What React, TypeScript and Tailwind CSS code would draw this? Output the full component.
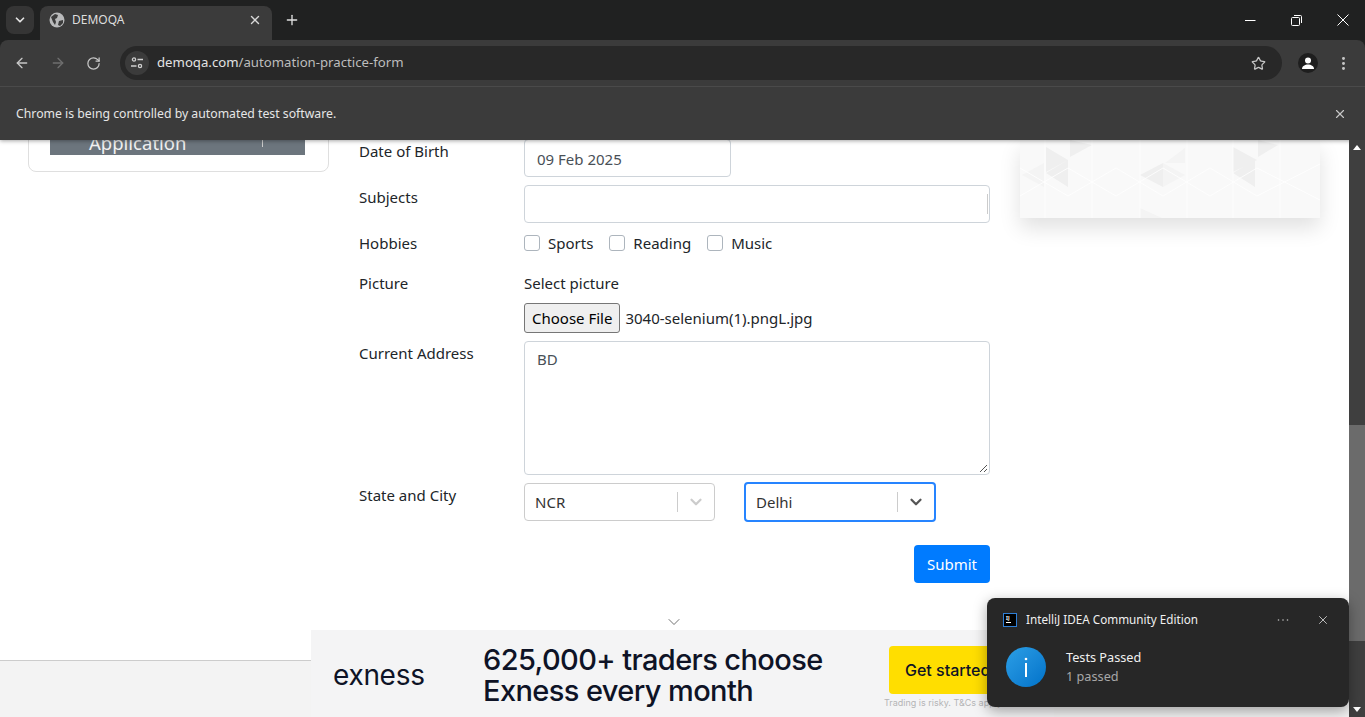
import { ArrowLeft, ArrowRight, ChevronDown, EllipsisVertical, Plus, RotateCw, Star, X } from 'lucide-react';

const ui = 'font-["Noto_Sans",sans-serif]';

function Globe() {
  return (
    <svg width="16" height="16" viewBox="0 0 16 16" className="shrink-0">
      <circle cx="8" cy="8" r="7.5" fill="#b9babb" />
      <path d="M2 5l4-3 3 1-1 3-2 1 1 3-1 3-2-3zM10 9l4-1 0 3-3 3-2-1z" fill="#3c3c3c" />
    </svg>
  );
}

function Toolbar() {
  return (
    <div className="flex h-[46px] items-center rounded-t-lg bg-[#3b3b3b]">
      <div className="flex w-[120px] items-center pl-[14px] text-[#c7c7c7]">
        <ArrowLeft size={16} strokeWidth={2} />
        <ArrowRight size={16} strokeWidth={2} className="ml-[20px] text-[#6f6f6f]" />
        <RotateCw size={15} strokeWidth={2} className="ml-[20px]" />
      </div>
      <div className="flex h-[34px] w-[1162px] items-center rounded-full bg-[#282828]">
        <div className="ml-[5px] flex h-[24px] w-[24px] items-center justify-center rounded-full bg-[#3b3b3b]">
          <svg width="14" height="14" viewBox="0 0 14 14" fill="none" stroke="#d0d0d0" strokeWidth="1.3">
            <circle cx="4" cy="3.5" r="1.6" />
            <path d="M7.5 3.5H13M1 10h5.5" />
            <circle cx="10" cy="10" r="1.6" />
          </svg>
        </div>
        <span className="ml-[8px] text-[13.2px] text-[#e3e3e3]">
          demoqa.com<span className="text-[#bdbdbd]">/automation-practice-form</span>
        </span>
        <Star size={15} strokeWidth={2} className="ml-auto mr-[16px] text-[#c7c7c7]" />
      </div>
      <div className="ml-[16px] flex h-[20px] w-[20px] items-center justify-center overflow-hidden rounded-full bg-[#1e1e1e]">
        <svg width="14" height="14" viewBox="0 0 14 14" fill="#fff">
          <circle cx="7" cy="4.5" r="3" />
          <path d="M1 13c0-3 3-4.500 6-4.500s6 1.500 6 4.500z" />
        </svg>
      </div>
      <EllipsisVertical size={17} strokeWidth={2.2} className="ml-[17px] text-[#c7c7c7]" />
    </div>
  );
}

function BrowserChrome() {
  return (
    <header className={`relative z-10 h-[140px] shrink-0 bg-[#202121] shadow-[0_1px_4px_rgba(0,0,0,0.35)] ${ui}`}>
      <div className="flex h-[40px] items-end pl-[6px]">
        <div className="mb-[6px] flex h-[28px] w-[28px] items-center justify-center rounded-lg bg-[#353535] text-[#e3e3e3]">
          <ChevronDown size={14} strokeWidth={3} />
        </div>
        <div className="ml-[6px] flex h-[34px] w-[232px] items-center rounded-t-lg bg-[#3b3b3b] pb-[6px] pl-[9px] pr-[10px]">
          <Globe />
          <span className="ml-[7px] text-[12px] text-[#dedede]">DEMOQA</span>
          <X size={14} strokeWidth={2.4} className="ml-auto text-[#d8d8d8]" />
        </div>
        <Plus size={16} strokeWidth={2} className="mb-[12px] ml-[12px] text-[#e0e0e0]" />
        <div className="mb-[14px] ml-auto flex items-center text-white">
          <svg width="11" height="11" viewBox="0 0 11 11" stroke="currentColor" fill="none" className="mr-[35px]">
            <path d="M0 5.500h10.500" />
          </svg>
          <svg width="11" height="11" viewBox="0 0 11 11" stroke="currentColor" fill="none" className="mr-[35px]">
            <rect x="0.500" y="2.500" width="8" height="8" rx="1" />
            <path d="M3 .5h6.500a1 1 0 0 1 1 1V8" />
          </svg>
          <svg width="12" height="12" viewBox="0 0 12 12" stroke="currentColor" fill="none" className="mr-[16px]">
            <path d="M.5.5l11 11M11.500.5l-11 11" />
          </svg>
        </div>
      </div>
      <Toolbar />
      <div className="flex h-[54px] items-center justify-between border-t border-[#4a4a4a] bg-[#3b3b3b] pl-[16px] pr-[18px]">
        <span className="pt-px text-[12.25px] text-[#e6e6e6]">Chrome is being controlled by automated test software.</span>
        <X size={14} strokeWidth={2} className="text-[#c7c7c7]" />
      </div>
    </header>
  );
}

function Sidebar() {
  return (
    <aside className="ml-[28px] h-[60px] w-[301px] shrink-0 rounded-b-lg border border-[#dfdfdf] pl-[21px] pr-[23px] -mt-[28px]">
      <div className="flex h-[42px] items-end justify-between bg-[#6c757d] pl-[39px] pr-[42px]">
        <span className="text-[18.5px] leading-[25px] text-[#f1f1f1]">Application</span>
        <span className="mb-[8px] h-[7px] w-px bg-[#ccc]" />
      </div>
    </aside>
  );
}

function Row({ label, children }: { label: string; children: React.ReactNode }) {
  return (
    <div className="flex">
      <label className="w-[165px] shrink-0 leading-[24px] text-[#212529]">{label}</label>
      <div className="min-w-0 flex-1">{children}</div>
    </div>
  );
}

function Hobby({ label }: { label: string }) {
  return (
    <label className="flex items-center gap-[8px]">
      <span className="h-[16px] w-[16px] rounded-[3px] border border-[#adb5bd] bg-white" />
      {label}
    </label>
  );
}

function Select({ value, focused }: { value: string; focused?: boolean }) {
  return (
    <div
      className={
        focused
          ? 'flex h-[40px] w-[192px] items-center rounded-[4px] border-2 border-[#2684ff] bg-white pl-[10px]'
          : 'flex h-[38px] w-[191px] items-center rounded-[4px] border border-[#ccc] bg-white pl-[10px]'
      }
    >
      <span className="flex-1 text-[#333]">{value}</span>
      <span className="h-[20px] w-px bg-[#ccc]" />
      <ChevronDown size={18} strokeWidth={3} className={focused ? 'mx-[9px] text-[#555]' : 'mx-[9px] text-[#ccc]'} />
    </div>
  );
}

function PracticeForm() {
  return (
    <form className="ml-[30px] flex w-[631px] shrink-0 flex-col gap-[8px] -mt-px">
      <Row label="Date of Birth">
        <div className="flex h-[38px] w-[207px] items-center rounded-[4px] border border-[#ced4da] pl-[12px] pt-[2px] text-[#495057]">
          09 Feb 2025
        </div>
      </Row>
      <Row label="Subjects">
        <div className="flex h-[38px] items-center justify-end rounded-[4px] border border-[#ced4da] pr-px">
          <span className="h-[20px] w-px bg-[#ccc]" />
        </div>
      </Row>
      <Row label="Hobbies">
        <div className="flex h-[24px] items-center gap-[16px] text-[#212529]">
          <Hobby label="Sports" />
          <Hobby label="Reading" />
          <Hobby label="Music" />
        </div>
      </Row>
      <div className="mt-[8px]">
        <Row label="Picture">
          <p className="leading-[24px] text-[#212529]">Select picture</p>
          <div className="mt-[8px] flex h-[30px] items-center">
            <span className="flex h-[30px] items-center rounded-[3px] border border-[#767676] bg-[#efefef] px-[7px] text-black">
              Choose File
            </span>
            <span className="ml-[5px] text-[#212529]">3040-selenium(1).pngL.jpg</span>
          </div>
        </Row>
      </div>
      <Row label="Current Address">
        <div className="relative h-[134px] rounded-[4px] border border-[#ced4da] px-[12px] py-[6px] text-[#495057]">
          BD
          <svg width="9" height="9" viewBox="0 0 9 9" stroke="#555" className="absolute bottom-px right-px">
            <path d="M1 8l7-7M5 8l3-3" />
          </svg>
        </div>
      </Row>
      <Row label="State and City">
        <div className="flex items-center gap-[29px] -my-px">
          <Select value="NCR" />
          <Select value="Delhi" focused />
        </div>
      </Row>
      <div className="mt-[16px] flex justify-end">
        <span className="flex h-[38px] w-[76px] items-center justify-center rounded-[4px] bg-[#007bff] text-white">
          Submit
        </span>
      </div>
    </form>
  );
}

function AdPattern() {
  return (
    <div className="ml-[30px] h-[78px] w-[300px] shrink-0 bg-[#f9f9f9] shadow-[0_10px_20px_rgba(0,0,0,0.12)]">
      <svg width="300" height="78" viewBox="0 0 300 78">
        <path
          d="M26 7l22 13-22 12zM26 33l22-13v27zM50 0l22 5-22 12zM120 35l23-12v24zM213 7l24 13-24 12zM213 33l22-13v27zM238 0l20 5-20 12z"
          fill="#efefef"
        />
        <path d="M143 23l22 12-22 12zM145 23l20-15v15zM120 68l22 10h-22zM2 35l22-12v24z" fill="#f4f4f4" />
        <path
          d="M0 28l48 28 48-28 47 28 47-28 47 28 63-32M0 56l48-28 48 28 47-28 47 28 47-28 63 32M25 0v78M72 0v78M120 0v78M167 0v78M213 0v78M260 0v78"
          stroke="#ffffff"
          strokeOpacity="0.8"
          fill="none"
        />
      </svg>
    </div>
  );
}

function Banner() {
  return (
    <div className="absolute inset-x-0 bottom-0 h-[57px] border-t border-[#ccc] bg-[#f3f3f3]">
      <div className="absolute -top-[31px] bottom-0 left-[311px] flex w-[743px] items-center bg-[#f4f4f5] pt-[2px] font-['Inter',sans-serif] text-[#0e1326]">
        <ChevronDown size={20} strokeWidth={1} className="absolute -top-[18px] left-[353px] text-[#555]" />
        <span className="ml-[22px] w-[150px] text-[28px] font-normal tracking-[-0.3px]">exness</span>
        <p className="text-[29px] font-medium leading-[31px] tracking-[-0.6px]">
          625,000+ traders choose
          <br />
          Exness every month
        </p>
        <div className="absolute left-[578px] top-[16px] flex h-[48px] w-[130px] items-center rounded-[4px] bg-[#ffde00] pl-[16px] text-[16px] font-medium">
          Get started
        </div>
        <span className="absolute left-[573px] top-[66px] text-[9px] text-[#b5b5b5]">Trading is risky. T&amp;Cs apply</span>
      </div>
    </div>
  );
}

function Toast() {
  return (
    <div className={`absolute bottom-[10px] right-[16px] z-20 h-[109px] w-[362px] rounded-lg bg-[#272727] pl-[16px] pr-[19px] pt-[15px] shadow-[0_4px_14px_rgba(0,0,0,0.35)] ${ui}`}>
      <div className="flex h-[14px] items-center">
        <span className="flex h-[14px] w-[14px] flex-col border border-[#2f7fd6] bg-black px-[2px] py-px">
          <span className="text-[5px] font-bold leading-[6px] text-white">IJ</span>
          <span className="mt-px h-px w-[5px] bg-white" />
        </span>
        <span className="ml-[9px] text-[11.7px] text-[#f0f0f0]">IntelliJ IDEA Community Edition</span>
        <span className="ml-auto text-[#c0c0c0]">
          <svg width="12" height="4" viewBox="0 0 12 4" fill="currentColor">
            <circle cx="1.500" cy="2" r="0.800" />
            <circle cx="6" cy="2" r="0.800" />
            <circle cx="10.500" cy="2" r="0.800" />
          </svg>
        </span>
        <X size={14} strokeWidth={1.500} className="ml-[27px] text-[#d0d0d0]" />
      </div>
      <div className="ml-[3px] mt-[20px] flex items-center">
        <div className="flex h-[40px] w-[40px] items-center justify-center rounded-full bg-gradient-to-br from-[#2b9fe6] to-[#0072c9]">
          <svg width="4" height="20" viewBox="0 0 4 20" fill="#fff">
            <circle cx="2" cy="2" r="1.300" />
            <rect x="1" y="6" width="2" height="14" />
          </svg>
        </div>
        <div className="ml-[20px] text-[12.7px] leading-[19px]">
          <p className="text-[#f0f0f0]">Tests Passed</p>
          <p className="text-[#a8a8a8]">1 passed</p>
        </div>
      </div>
    </div>
  );
}

function Scrollbar() {
  return (
    <div className="absolute inset-y-0 right-0 z-10 flex w-[16px] flex-col items-center bg-[#3f3f3f]">
      <span className="mt-[5px] h-0 w-0 border-x-[4px] border-b-[5px] border-x-transparent border-b-white" />
      <span className="mt-[275px] h-[216px] w-full bg-[#6b6b6b]" />
      <span className="mt-auto mb-[5px] h-0 w-0 border-x-[4px] border-t-[5px] border-x-transparent border-t-white" />
    </div>
  );
}

export default function App() {
  return (
    <div className="flex h-[717px] w-[1365px] flex-col overflow-hidden bg-white font-['Noto_Sans',sans-serif] text-[15px]">
      <BrowserChrome />
      <main className="relative min-h-0 flex-1">
        <div className="flex items-start">
          <Sidebar />
          <PracticeForm />
          <AdPattern />
        </div>
        <Banner />
        <Toast />
        <Scrollbar />
      </main>
    </div>
  );
}
